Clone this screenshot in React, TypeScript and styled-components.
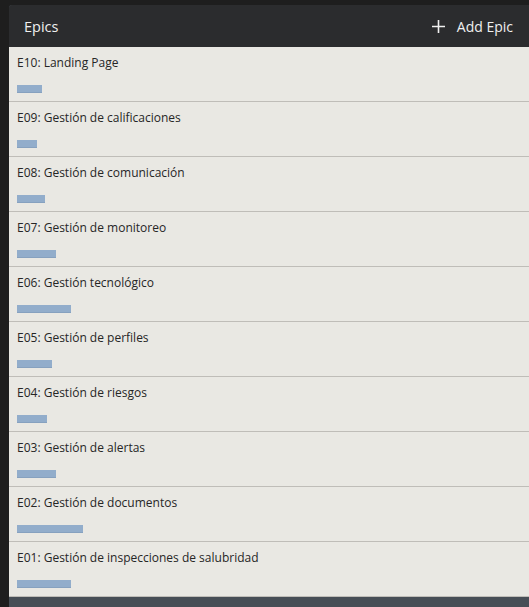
import React from 'react';
import styled, { createGlobalStyle } from 'styled-components';

const GlobalStyle = createGlobalStyle`
    html, body {
        margin: 0;
        padding: 0;
        background: #1e1e1e;
        font-family: 'Open Sans', 'Liberation Sans', sans-serif;
    }
    #root {
        min-height: 100vh;
    }
`;

const Page = styled.div`
    height: 100vh;
    padding: 5px 0 0 9px;
    box-sizing: border-box;
    display: flex;
`;

const Panel = styled.section`
    flex: 1;
    display: flex;
    flex-direction: column;
    background: #474e56;
    border-top-left-radius: 3px;
    overflow: hidden;
`;

const Header = styled.header`
    height: 42px;
    flex: none;
    display: flex;
    align-items: center;
    justify-content: space-between;
    padding: 0 16px 0 15px;
    background: #2b2c2e;
    color: #f0f0f0;
`;

const Title = styled.h2`
    margin: 0;
    font-size: 14.5px;
    font-weight: 400;
`;

const AddButton = styled.button`
    display: flex;
    align-items: center;
    gap: 12px;
    padding: 0;
    border: none;
    background: none;
    color: #f0f0f0;
    font-family: inherit;
    font-size: 14px;
    cursor: pointer;

    svg {
        width: 13px;
        height: 13px;
    }
`;

const List = styled.ul`
    list-style: none;
    margin: 0;
    padding: 0;
    background: #e9e8e3;
    border-bottom: 1px solid #bfbdb8;
`;

const Row = styled.li`
    padding: 7px 8px 8px 8px;
    border-bottom: 1px solid #bfbdb8;

    &:last-child {
        border-bottom: none;
    }
`;

const EpicName = styled.div`
    font-size: 12px;
    line-height: 18px;
    color: #262626;
`;

const Progress = styled.div<{ $width: number }>`
    margin-top: 13px;
    height: 8px;
    width: ${props => props.$width}px;
    background: #92adcb;
    box-shadow: inset 0 -1px 0 #86a1bf;
`;

const epics = [
    { id: 'E10', name: 'Landing Page', bar: 25 },
    { id: 'E09', name: 'Gestión de calificaciones', bar: 20 },
    { id: 'E08', name: 'Gestión de comunicación', bar: 28 },
    { id: 'E07', name: 'Gestión de monitoreo', bar: 39 },
    { id: 'E06', name: 'Gestión tecnológico', bar: 54 },
    { id: 'E05', name: 'Gestión de perfiles', bar: 35 },
    { id: 'E04', name: 'Gestión de riesgos', bar: 30 },
    { id: 'E03', name: 'Gestión de alertas', bar: 39 },
    { id: 'E02', name: 'Gestión de documentos', bar: 66 },
    { id: 'E01', name: 'Gestión de inspecciones de salubridad', bar: 54 },
];

export default function App() {
    return (
        <>
            <GlobalStyle />
            <Page>
                <Panel>
                    <Header>
                        <Title>Epics</Title>
                        <AddButton>
                            <svg viewBox="0 0 13 13">
                                <path d="M6.5 0v13M0 6.5h13" stroke="#f0f0f0" strokeWidth="1.6" />
                            </svg>
                            Add Epic
                        </AddButton>
                    </Header>
                    <List>
                        {epics.map(epic => (
                            <Row key={epic.id}>
                                <EpicName>
                                    {epic.id}: {epic.name}
                                </EpicName>
                                <Progress $width={epic.bar} />
                            </Row>
                        ))}
                    </List>
                </Panel>
            </Page>
        </>
    );
}
